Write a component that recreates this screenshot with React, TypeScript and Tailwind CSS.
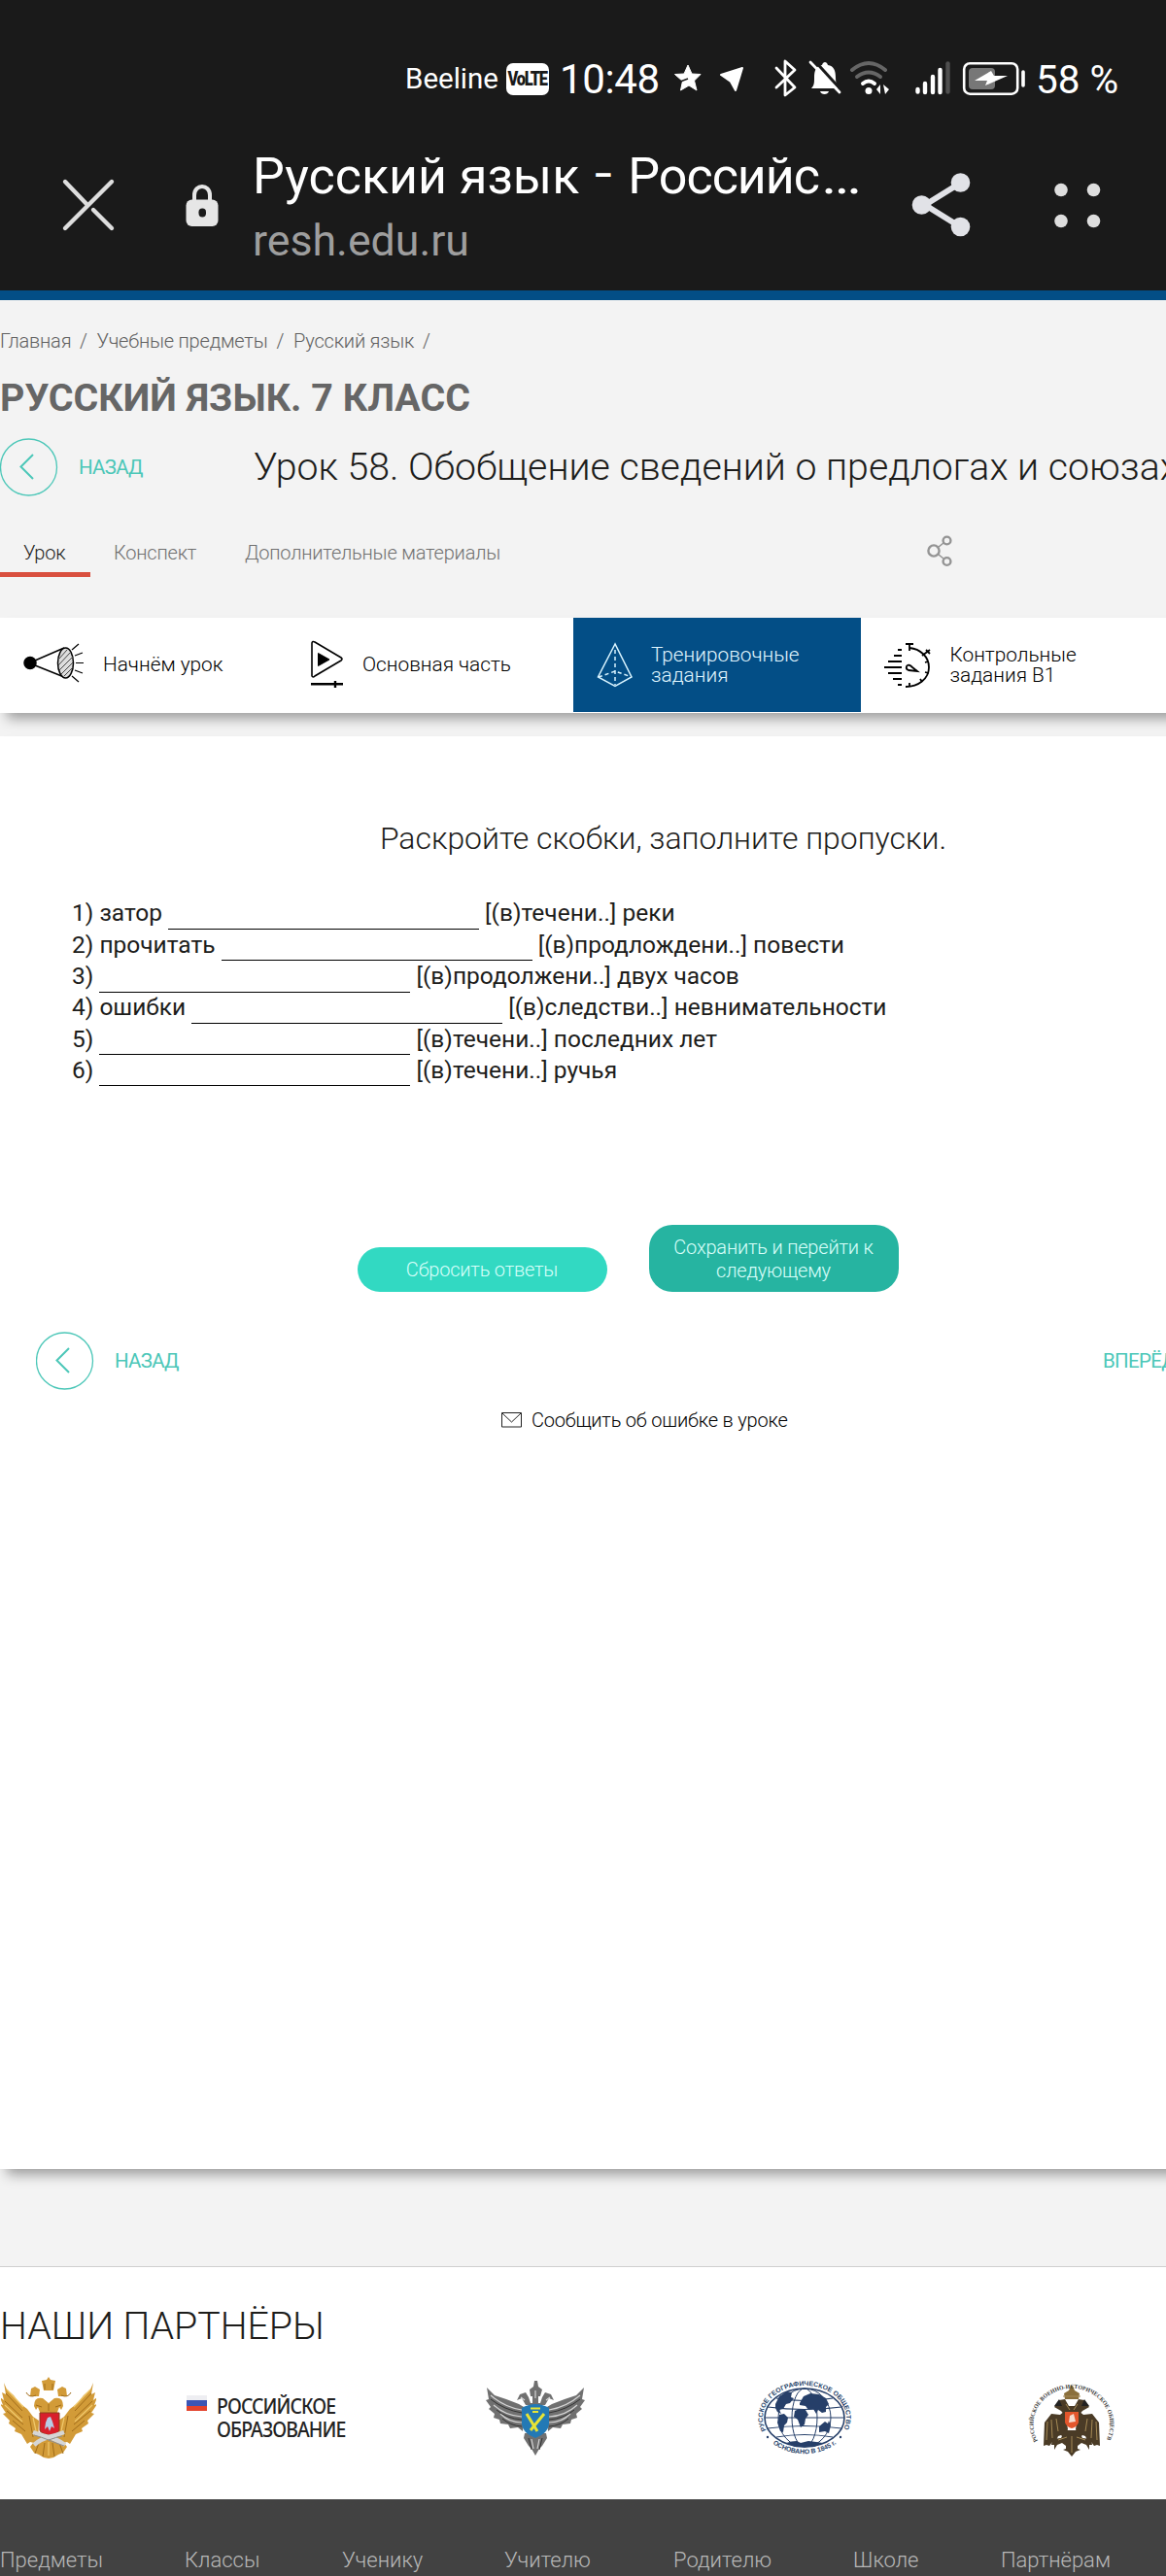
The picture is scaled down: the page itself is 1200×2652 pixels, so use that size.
import type { ReactNode } from "react";

const tasks = [
  { before: "1) затор ", after: " [(в)течени..] реки" },
  { before: "2) прочитать ", after: " [(в)продлождени..] повести" },
  { before: "3) ", after: " [(в)продолжени..] двух часов" },
  { before: "4) ошибки ", after: " [(в)следстви..] невнимательности" },
  { before: "5) ", after: " [(в)течени..] последних лет" },
  { before: "6) ", after: " [(в)течени..] ручья" },
];

const footerLinks = [
  { label: "Предметы", width: "w-[190px]" },
  { label: "Классы", width: "w-[162px]" },
  { label: "Ученику", width: "w-[167px]" },
  { label: "Учителю", width: "w-[174px]" },
  { label: "Родителю", width: "w-[185px]" },
  { label: "Школе", width: "w-[152px]" },
  { label: "Партнёрам", width: "w-[160px]" },
];

function StatusIcons() {
  return (
    <svg className="shrink-0" width="366" height="40" viewBox="690 61 366 40" fill="#fff">
      {/* star */}
      <path d="M708 67l4 9 9 .5-6.500 6.500 2.500 10-8-5-8.500 5 2-9.500-8-7 9.500-.5z" stroke="#fff" strokeLinejoin="round" />
      <path d="M700 84l8-3" stroke="#1a1a1a" strokeWidth="1.500" />
      {/* location arrow */}
      <path d="M742 77l22-7-7 23-5-9z" stroke="#fff" strokeWidth="2" strokeLinejoin="round" />
      {/* bluetooth */}
      <path d="M799 70l19 20-10 8V63l10 9-19 18" fill="none" stroke="#fff" strokeWidth="2.800" strokeLinejoin="round" strokeLinecap="round" />
      {/* muted bell */}
      <path d="M835 91c3-3 3-6 3-11 0-8 2-12 8-13 1-4 5-4 6 0 6 1 8 5 8 13 0 5 1 8 3 11z" />
      <path d="M844 94h9c-1 4-8 4-9 0z" />
      <path d="M837 61l29 32" stroke="#1a1a1a" strokeWidth="3" />
      <path d="M834 64l30 31" stroke="#fff" strokeWidth="2.800" strokeLinecap="round" />
      {/* wifi */}
      <g fill="none" strokeLinecap="round" strokeWidth="4">
        <path d="M877 72q17-14 34 0" stroke="#666" />
        <path d="M882 79q12-9 24 0" stroke="#666" />
        <path d="M888 86q6-5 12 0" stroke="#fff" />
      </g>
      <circle cx="894" cy="93.500" r="3.500" />
      <path d="M902 92l4-5v10zM909 87l6 5-4 5z" />
      {/* cell signal */}
      <g strokeLinecap="round" strokeWidth="4.400" stroke="#fff">
        <path d="M944.500 92v2.500M952 86v9M960 79v16M967.500 72v23" />
        <path d="M975.500 65.500v29" stroke="#4f4f4f" />
      </g>
      {/* battery */}
      <rect x="992.200" y="65.200" width="55" height="31.500" rx="6" fill="none" stroke="#fff" strokeWidth="2.600" />
      <rect x="997" y="70" width="27" height="22" rx="4" fill="#777" />
      <path d="M1020 73l-17 10h13l-2 5 23-10h-14z" />
      <path d="M1053 74v14" stroke="#fff" strokeWidth="3.600" strokeLinecap="round" />
    </svg>
  );
}

function BrowserHeader() {
  return (
    <header className="h-[299px] w-full bg-[#1a1a1a] text-white">
      <div className="h-[149px] pt-12">
        <div className="flex h-[66px] items-center pl-[417px] whitespace-nowrap">
          <span className="w-[104px] text-[29.5px]">Beeline</span>
          <span className="flex h-[33px] w-[44px] items-center justify-center rounded-[7px] bg-white text-[20px] font-black tracking-[-1.5px] text-[#1a1a1a]">
            <span className="scale-x-[0.82]">VoLTE</span>
          </span>
          <span className="ml-[11px] w-[114px] text-[42px] tracking-[-0.4px]">10:48</span>
          <StatusIcons />
          <span className="mt-[3px] ml-[10px] text-[40.5px]">58 %</span>
        </div>
      </div>
      <div className="flex h-[133px] whitespace-nowrap">
        <svg className="mt-[32px] ml-[61px] shrink-0" width="60" height="60" viewBox="61 181 60 60" fill="none" stroke="#dedede" strokeWidth="4.400" strokeLinecap="round">
          <path d="M115 187L67 235M67 187l23 24M96 216l19 19" />
        </svg>
        <svg className="mt-[39px] ml-[68px] shrink-0" width="38" height="48" viewBox="189 188 38 48">
          <path d="M200 208v-7c0-12 16-12 16 0v7" fill="none" stroke="#e6e6e6" strokeWidth="4" />
          <rect x="191.500" y="205.500" width="33" height="27.500" rx="6" fill="#e6e6e6" />
          <rect x="204.500" y="214.500" width="7.500" height="9" rx="3.700" fill="#1a1a1a" />
        </svg>
        <div className="ml-[33px] w-[664px]">
          <div className="text-[52px] leading-[66px]">
            Русский язык <span className="-mx-[5px] inline-block scale-x-[0.6]">–</span>{" "}
            <span className="tracking-[-1px]">Российс</span>
            <span className="ml-[2px] inline-block origin-left scale-x-[1.2]">…</span>
          </div>
          <div className="text-[44.7px] leading-[66px] text-[#9e9e9e]">resh.edu.ru</div>
        </div>
        <svg className="mt-[27px] ml-[13px] shrink-0" width="62" height="70" viewBox="937 176 62 70" fill="#e1e2e7">
          <path d="M989 188l-37 23 37 23" fill="none" stroke="#e1e2e7" strokeWidth="6" />
          <circle cx="948.500" cy="211" r="9.800" />
          <circle cx="988.500" cy="188" r="9.800" />
          <circle cx="988.500" cy="233.500" r="9.800" />
        </svg>
        <svg className="mt-[38px] ml-[85px] shrink-0" width="50" height="50" viewBox="1084 187 50 50" fill="#dedede">
          <circle cx="1092" cy="195.500" r="6.800" />
          <circle cx="1125.500" cy="195.500" r="6.800" />
          <circle cx="1092" cy="227.500" r="6.800" />
          <circle cx="1125.500" cy="227.500" r="6.800" />
        </svg>
      </div>
    </header>
  );
}

function BackLink() {
  return (
    <a className="flex h-[60px] w-[200px] shrink-0 items-center text-[20.5px] tracking-[-0.7px] text-[#4cc7b8]">
      <svg className="mr-[21px]" width="60" height="60" viewBox="0 0 60 60" fill="none" stroke="#4cc7b8">
        <circle cx="29.500" cy="30" r="29" strokeWidth="1.300" />
        <path d="M34 17L21.500 29.500 34 42" strokeWidth="2" />
      </svg>
      НАЗАД
    </a>
  );
}

function StartIcon() {
  return (
    <svg width="64" height="50" viewBox="24 662 64 50" fill="none" stroke="#000" strokeWidth="1.500">
      <circle cx="31" cy="684.500" r="6" fill="#000" />
      <path d="M36 682l30-13M36 687l30 12" />
      <ellipse cx="67.500" cy="684.500" rx="8" ry="15.500" fill="#ddd" />
      <path d="M61 680l8-9M60 687l13-14M61 692l14-14M63 696l12-12M66 698l9-9" stroke="#444" strokeWidth="1" />
      <path d="M74 671l7-6M77 677l8-3M78 684.500h8M77 692l8 3M74 698l7 6" strokeWidth="1.200" />
    </svg>
  );
}

function PlayIcon() {
  return (
    <svg width="36" height="52" viewBox="319 660 36 52" fill="none" stroke="#000">
      <path d="M321 663v34q1 2 3 0l27-16q2-1.500 0-3l-27-16q-2.500-1.500-3 1z" strokeWidth="1.600" />
      <path d="M327.500 673.500v13l11.500-6.500z" fill="#000" />
      <path d="M320 705.300h33M345 702v7" strokeWidth="2.400" />
    </svg>
  );
}

function PyramidIcon() {
  return (
    <svg width="38" height="48" viewBox="613 661 38 48" fill="none" stroke="#d9f4ff" strokeWidth="1.500">
      <path d="M633 663l-17.500 34 17.500 9.500 17-9.500z" />
      <path d="M633 669v36M616 697l17-6 17 6" strokeDasharray="4 3" />
    </svg>
  );
}

function TimerIcon() {
  return (
    <svg width="50" height="50" viewBox="909 660 50 50" fill="none" stroke="#000" strokeWidth="1.800">
      <path d="M932 707c13 0 24-8 24-20 0-11-9-19-20-20" />
      <path d="M932 663h8M936 663v7M949 675l8-6M953 669l4 4M955 681l-3 1M956 693l-4-1M949 702l-2-3M936 707v-4" />
      <path d="M924 669h4M920 675h8M914 681h14M910 687h18M914 693h14M919 699h9M924 705h4" strokeWidth="2" />
      <path d="M933 686q2-3 6 1l5 4-9-1q-3-1-2-4z" />
    </svg>
  );
}

function Step({ icon, className, children }: { icon: ReactNode; className: string; children: ReactNode }) {
  return (
    <div className={`flex h-[97px] shrink-0 items-center text-[20.8px] leading-[21px] font-light ${className}`}>
      {icon}
      <span>{children}</span>
    </div>
  );
}

function LessonSteps() {
  return (
    <nav className="relative mt-[42px] flex h-[97.5px] w-[1365px] bg-white text-black shadow-[4px_9px_12px_-3px_rgba(0,0,0,0.35)]">
      <Step icon={<StartIcon />} className="w-[295px] gap-[18px] pl-[24px]">Начнём урок</Step>
      <Step icon={<PlayIcon />} className="w-[295px] gap-[18px] pl-[24px]">Основная часть</Step>
      <Step icon={<PyramidIcon />} className="w-[295.5px] gap-[19px] bg-[#034e86] pl-[23px] text-[#e0f6ff]">
        Тренировочные
        <br />
        задания
      </Step>
      <Step icon={<TimerIcon />} className="w-[479px] gap-[19px] pl-[23px]">
        Контрольные
        <br />
        задания В1
      </Step>
    </nav>
  );
}

function LessonHeader() {
  return (
    <div className="whitespace-nowrap">
      <div className="mt-[27px] flex h-[30px] items-center text-[20px] font-light tracking-[-0.2px] text-[#606060]">
        <span className="w-[82px]">Главная</span>
        <span className="w-[17.5px]">/</span>
        <span className="w-[185px]">Учебные предметы</span>
        <span className="w-[17.5px]">/</span>
        <span className="w-[133px]">Русский язык</span>
        <span>/</span>
      </div>
      <h1 className="mt-[20px] text-[39.4px] leading-[48px] font-bold text-[#666]">РУССКИЙ ЯЗЫК. 7 КЛАСС</h1>
      <div className="mt-[17px] flex h-[60px] items-center">
        <BackLink />
        <h2 className="-mt-[1px] ml-[61px] text-[39.25px] leading-[48px] font-light text-[#1d1d1b]">
          Урок 58. Обобщение сведений о предлогах и союзах
        </h2>
      </div>
      <div className="mt-[38px] flex h-[45px] text-[20px] leading-[41px] font-light tracking-[-0.2px] text-[#707070]">
        <span className="w-[93px] border-b-[5px] border-[#d94f3e] pl-[24px] text-[#1d1d1b]">Урок</span>
        <span className="w-[159px] pl-[24px]">Конспект</span>
        <span className="w-[701px]">Дополнительные материалы</span>
        <svg className="mt-[2px]" width="28" height="34" viewBox="953 551 28 34" fill="none" stroke="#949494" strokeWidth="2.400">
          <path d="M966 563l5-4M966 571l5 4" strokeWidth="1.600" />
          <circle cx="961" cy="567" r="5.600" />
          <circle cx="974.500" cy="556.500" r="3.900" />
          <circle cx="974.500" cy="578" r="3.900" />
        </svg>
      </div>
    </div>
  );
}

function Exercise() {
  return (
    <section className="mt-[24.5px] h-[1475px] w-[1365px] bg-white pt-[83px] whitespace-nowrap shadow-[4px_9px_12px_-3px_rgba(0,0,0,0.35)]">
      <h3 className="text-center text-[31.9px] leading-[44px] font-light text-[#1d1d1b]">Раскройте скобки, заполните пропуски.</h3>
      <div className="mt-[39.7px] pl-[74px] text-[24.5px] text-[#1d1d1b]">
        {tasks.map((task) => (
          <div key={task.before} className="flex h-[32.3px] items-center">
            <span className="whitespace-pre">{task.before}</span>
            <span className="w-[320px] self-end border-b border-black" />
            <span className="whitespace-pre">{task.after}</span>
          </div>
        ))}
      </div>
      <div className="mt-[143px] flex items-end gap-[43px] pl-[367.5px] text-[20px] leading-[24px] font-light tracking-[-0.2px]">
        <button className="h-[46px] w-[257px] rounded-[23px] bg-[#32d9c2] text-[#d9fffa]">Сбросить ответы</button>
        <button className="h-[69px] w-[257px] rounded-[24px] bg-[#26b4a1] text-[#d9fffa]">
          Сохранить и перейти к
          <br />
          следующему
        </button>
      </div>
      <div className="mt-[41px] flex items-center pl-[37px]">
        <BackLink />
        <span className="ml-[898px] text-[20.5px] tracking-[-0.7px] text-[#4cc7b8]">ВПЕРЁД</span>
      </div>
      <div className="mt-[17px] flex h-[28px] items-center pl-[516px] text-[20px] font-light tracking-[-0.2px] text-black">
        <svg className="mr-[10px]" width="21" height="16" viewBox="0 0 21 16" fill="none" stroke="#222">
          <path d="M.5.5h20v14.500H.5zM1 1l9.500 9L20 1" />
        </svg>
        Сообщить об ошибке в уроке
      </div>
    </section>
  );
}

// Golden double-headed eagle of the Ministry of Education
function EducationEmblem() {
  return (
    <svg width="98" height="84" viewBox="0 0 98 84">
      <g fill="#d29b38">
        <path d="M3 6l3 7 7 6 6 8 8 6 6 8 6 4-1 24-8-2-3 2-6-10-7-3 1-3-7-5 1-3-7-7 3-1-6-9 3 1-3-8 4 3-2-8 4 2z" />
        <path d="M95 6l-3 7-7 6-6 8-8 6-6 8-6 4 1 24 8-2 3 2 6-10 7-3-1-3 7-5-1-3 7-7-3-1 6-9-3 1 3-8-4 3 2-8-4 2z" />
        <path d="M39 60h20l9 12-4 6-5 2-5 3-5 1-5-1-5-3-5-2-4-6z" />
        <path d="M34 30q0-10 9-8l6 5 6-5q9-2 9 8l-2 4-2-3-3 8H41l-3-8-2 3z" />
        <path d="M42 4l5-1 2-3 2 3 5 1-2 10H44zM31 12l4-2 5 3-1 7h-9zM67 12l-4-2-5 3 1 7h9z" />
      </g>
      <g fill="none" stroke="#a06c19" strokeWidth="1">
        <path d="M5 17l17 18M4 25l18 17M6 35l17 14M12 45l13 11M93 17L76 35M94 25L76 42M92 35L75 49M86 45L73 56" />
        <path d="M39 68l-4 11M45 68l-2 14M53 68l2 14M60 68l4 11M36 29l6 2M56 31l6-2M49 28v7" />
        <path d="M26 16q3 6 10 3M72 16q-3 6-10 3M45 7v6M53 7v6M29 40l4 22M69 40l-4 22" />
      </g>
      <g fill="none" stroke="#f0c86b" strokeWidth="1.200">
        <path d="M6 13l17 18M4 29l18 17M92 13L75 31M94 29L76 46M49 67v14M33 42l4 18M65 42l-4 18" />
      </g>
      <path d="M40 37h20v18q0 3-10 5-10-2-10-5z" fill="#d81f2c" stroke="#8a3d1b" />
      <path d="M45 54l1-7 2-5 3-1 2 5 2 7-3-2-2 5-2-5z" fill="#b8cbe6" />
      <path d="M33 57q8 3 16 5t17 8M65 57q-8 3-16 5t-15 8" fill="none" stroke="#d6d6d6" strokeWidth="4.500" />
      <path d="M34 60q8 2 15 5t16 6M63 61q-6 1-14 4" fill="none" stroke="#8f8f8f" strokeWidth="1" />
    </svg>
  );
}

// Silver winged emblem with a blue and yellow shield
function SilverEmblem() {
  return (
    <svg width="104" height="80" viewBox="0 0 104 80">
      <g fill="#707070">
        <path d="M2 9l8 8 12 4 13 5 5 3-1 25-5-4-8 1-2-4-8-1-1-4-6-2 1-4-6-5 2-2-5-7 3-1z" />
        <path d="M102 9l-8 8-12 4-13 5-5 3 1 25 5-4 8 1 2-4 8-1 1-4 6-2-1-4 6-5-2-2 5-7-3-1z" />
        <path d="M41 56h22l1 5-5 8-3 3-4 7-4-7-3-3-5-8z" />
        <path d="M33 22l3-6 6-2 3 5 2 6h10l2-6 3-5 6 2 3 6-5-2-4 7H42l-4-7z" />
        <path d="M46 11l4-3 1-6h3l1 6 4 3-2 7h-2v7h-6v-7h-2z" />
      </g>
      <g fill="none" stroke="#d5d5d5" strokeWidth="1.200">
        <path d="M6 17q14 12 32 15M9 27q12 11 29 12M16 36q9 9 22 9M98 17Q84 29 66 32M95 27Q83 38 66 39M88 36q-9 9-22 9" />
        <path d="M48 62l2 10M56 62l-2 10M37 19l4 3M67 19l-4 3M52 12v8" />
      </g>
      <g fill="none" stroke="#333" strokeWidth="1">
        <path d="M6 21q14 11 32 14M12 32q11 9 26 10M98 21Q84 32 66 35M92 32q-11 9-26 10M45 61l3 12M59 61l-3 12M18 41q8 7 20 8M86 41q-8 7-20 8" />
      </g>
      <path d="M38 30q14-8 28 0v17q-1 9-14 14-13-5-14-14z" fill="#2379b5" />
      <path d="M43 36l11 18M61 36L47 53" fill="none" stroke="#e7e435" strokeWidth="3" />
      <path d="M47 30.500h10M49 34h6" fill="none" stroke="#e7e435" strokeWidth="1.800" />
    </svg>
  );
}

function GeographicLogo() {
  return (
    <svg width="98" height="80" viewBox="-49 -40 98 80" fill="none" stroke="#263f69">
      <defs>
        <path id="geo-top" d="M-39.500 13A43 33 0 1 1 39.500 13" />
        <path id="geo-bottom" d="M-35.800 24A47 37.500 0 0 0 35.800 24" />
      </defs>
      <ellipse cx="0" cy="0" rx="41" ry="30" strokeWidth="1.600" />
      <ellipse cx="0" cy="0" rx="27" ry="30" />
      <ellipse cx="0" cy="0" rx="13" ry="30" />
      <path d="M-41 0h82M-38-11q38 5 76 0M-38 11q38-5 76 0M-29-20q29 5 58 0M-29 20q29-5 58 0" strokeWidth="1.200" />
      <g fill="#263f69" stroke="none">
        <path d="M-30-14l4-8 8-5 5 1-1 5 3 1-4 5-4 1-3 5-4 1 2 4-4-2-2-4zM-26-3l5-1 4 4-1 5-3 3-1 7-3-1-3-9z" />
        <path d="M-5-15l4-7 7-3 9 1 7 4 3 6-3 3v5l-4 1-4-3-2 4-3-5-5 1-3-4-6-1zM-10-7l4-2 7 1 3 5-3 4-1 6-4 3-3-8-4-3z" />
        <path d="M15 9l6-5 3 2 1-3 2 5-2 8-4-2-6 1zM-19 26q6-2 11-2l4 2 8-2 8 1 7 1-9 4H-10z" />
      </g>
      <g fill="#263f69" stroke="none" className="font-['Liberation_Sans'] text-[6.8px] font-bold">
        <text textLength="145" lengthAdjust="spacingAndGlyphs">
          <textPath href="#geo-top">РУССКОЕ ГЕОГРАФИЧЕСКОЕ ОБЩЕСТВО</textPath>
        </text>
        <text>
          <textPath href="#geo-bottom" startOffset="50%" textAnchor="middle">ОСНОВАНО В 1845 г.</textPath>
        </text>
      </g>
      <circle cx="-38" cy="20" r="1.200" fill="#263f69" stroke="none" />
      <circle cx="37" cy="20" r="1.200" fill="#263f69" stroke="none" />
    </svg>
  );
}

function MilitaryHistoryLogo() {
  return (
    <svg width="90" height="82" viewBox="-45 -41 90 82">
      <defs>
        <path id="mil-arc" d="M-35 24A39.500 37 0 1 1 35 24" />
      </defs>
      <g fill="#4a3b26">
        <path d="M-7-19l-1-6 5-3 2-5h2l2 5 5 3-1 6z" fill="#8a6f3c" />
        <path d="M-18-11l5-7 6-1 4 7h6l4-7 6 1 5 7-7 4-5 6H-6l-5-6z" />
        <path d="M-7-7l-5 4-9-1-7 9-1 24 3-1 3 1 3-4 3 1 3-7 3-1 3 3 4-9zM7-7l5 4 9-1 7 9 1 24-3-1-3 1-3-4-3 1-3-7-3-1-3 3-4-9z" />
        <path d="M-7 13H7l4 8 9 1 1 6h-3v5l-3-5-5-2-4 3v3l3 1-5 2-4 5-4-5-5-2 3-1v-3l-4-3-5 2-3 5v-5h-3l1-6 9-1z" />
      </g>
      <g fill="none" stroke="#a58a56" strokeWidth="1">
        <path d="M-25 4l-1 19M-21 2l1 19M-16 1l2 13M25 4l1 19M21 2l-1 19M16 1l-2 13M0 19v17M-9-22H9M-5 20l-9 3M5 20l9 3M-6-14l4 6M6-14l-4 6" />
      </g>
      <path d="M-7-6H7V5q-2 5-7 6-5-1-7-6z" fill="#e3562c" />
      <path d="M-3 5l1-7 4-2 2 8z" fill="#f6ddd0" />
      <path d="M-18-12l5-7 3 7zM18-12l-5-7-3 7z" fill="#222" />
      <text fill="#333" textLength="158" lengthAdjust="spacingAndGlyphs" className="font-['Liberation_Serif'] text-[6px] font-bold">
        <textPath href="#mil-arc">РОССИЙСКОЕ ВОЕННО-ИСТОРИЧЕСКОЕ ОБЩЕСТВО</textPath>
      </text>
    </svg>
  );
}

function Partners() {
  return (
    <section className="mt-[100px] h-[240px] border-t border-[#cfcfcf] bg-white pt-[37px] whitespace-nowrap">
      <h2 className="text-[39.3px] leading-[48px] font-light text-[#1d1d1b]">НАШИ ПАРТНЁРЫ</h2>
      <div className="mt-[28px] flex h-[84px] items-center">
        <div className="w-[192px] pl-px">
          <EducationEmblem />
        </div>
        <div className="flex w-[307px] items-start gap-[10px]">
          <div className="mt-[1px] h-[16px] w-[21px]">
            <div className="h-[5px] bg-[#eeeef2]" />
            <div className="h-[6px] bg-[#3c55b4]" />
            <div className="h-[5px] bg-[#e3432c]" />
          </div>
          <div className="origin-left scale-x-[0.925] font-['Noto_Sans'] text-[21px] leading-[24.5px] font-medium tracking-[-1px] text-[#222]">
            РОССИЙСКОЕ
            <br />
            ОБРАЗОВАНИЕ
          </div>
        </div>
        <div className="w-[280px]">
          <SilverEmblem />
        </div>
        <div className="w-[279px]">
          <GeographicLogo />
        </div>
        <MilitaryHistoryLogo />
      </div>
    </section>
  );
}

export default function App() {
  return (
    <div className="flex h-[2652px] w-[1200px] flex-col overflow-hidden bg-[#f3f3f3] font-['Roboto',sans-serif]">
      <BrowserHeader />
      <div className="h-[10px] shrink-0 bg-[#034e86]" />
      <LessonHeader />
      <LessonSteps />
      <Exercise />
      <Partners />
      <footer className="flex h-[79px] bg-[#424242] pt-[48px] text-[22px] leading-[30px] font-light whitespace-nowrap text-[#b8b8b8]">
        {footerLinks.map((link) => (
          <a key={link.label} className={link.width}>{link.label}</a>
        ))}
      </footer>
    </div>
  );
}
